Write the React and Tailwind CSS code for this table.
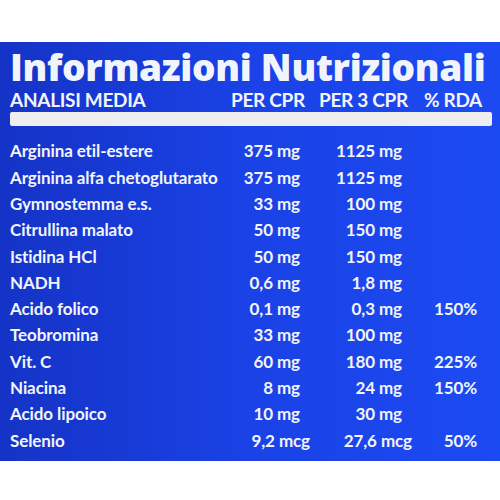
const ROWS = [
  ['Arginina etil-estere', '375 mg', '1125 mg', ''],
  ['Arginina alfa chetoglutarato', '375 mg', '1125 mg', ''],
  ['Gymnostemma e.s.', '33 mg', '100 mg', ''],
  ['Citrullina malato', '50 mg', '150 mg', ''],
  ['Istidina HCl', '50 mg', '150 mg', ''],
  ['NADH', '0,6 mg', '1,8 mg', ''],
  ['Acido folico', '0,1 mg', '0,3 mg', '150%'],
  ['Teobromina', '33 mg', '100 mg', ''],
  ['Vit. C', '60 mg', '180 mg', '225%'],
  ['Niacina', '8 mg', '24 mg', '150%'],
  ['Acido lipoico', '10 mg', '30 mg', ''],
  ['Selenio', '9,2 mcg', '27,6 mcg', '50%'],
];

export default function App() {
  return (
    <div className="w-[500px] h-[500px] bg-white pt-[42px] font-['Lato',sans-serif]">
      <div className="h-[419px] bg-gradient-to-r from-[#1533c6] via-[#1a42e6] to-[#1c4af2] text-[#f2f4fb] pl-[10px] pr-[8px] pt-[6px]">
        <h1 className="font-['Open_Sans',sans-serif] text-[37px] leading-[38px] font-extrabold tracking-[-0.3px] whitespace-nowrap">
          Informazioni Nutrizionali
        </h1>

        {/* column header */}
        <div className="grid grid-cols-[215px_80px_103px_74px] text-[19px] leading-[20px] font-bold tracking-[-0.3px] mt-[4px]">
          <span>ANALISI MEDIA</span>
          <span className="text-right">PER CPR</span>
          <span className="text-right">PER 3 CPR</span>
          <span className="text-right">% RDA</span>
        </div>

        <div className="h-[14px] bg-[#eeeef0] rounded-[2px] mt-[2px] mb-[12px]" />

        <div className="flex flex-col">
          {ROWS.map(([name, one, three, rda]) => (
            <div
              key={name}
              className="grid grid-cols-[215px_75px_102px_75px] h-[26.3px] items-center text-[17px] font-bold tracking-[-0.1px] whitespace-nowrap"
            >
              <span>{name}</span>
              <span className={name === 'Selenio' ? 'text-right mr-[-10px]' : 'text-right'}>{one}</span>
              <span className={name === 'Selenio' ? 'text-right mr-[-10px]' : 'text-right'}>{three}</span>
              <span className="text-right">{rda}</span>
            </div>
          ))}
        </div>
      </div>
    </div>
  );
}
